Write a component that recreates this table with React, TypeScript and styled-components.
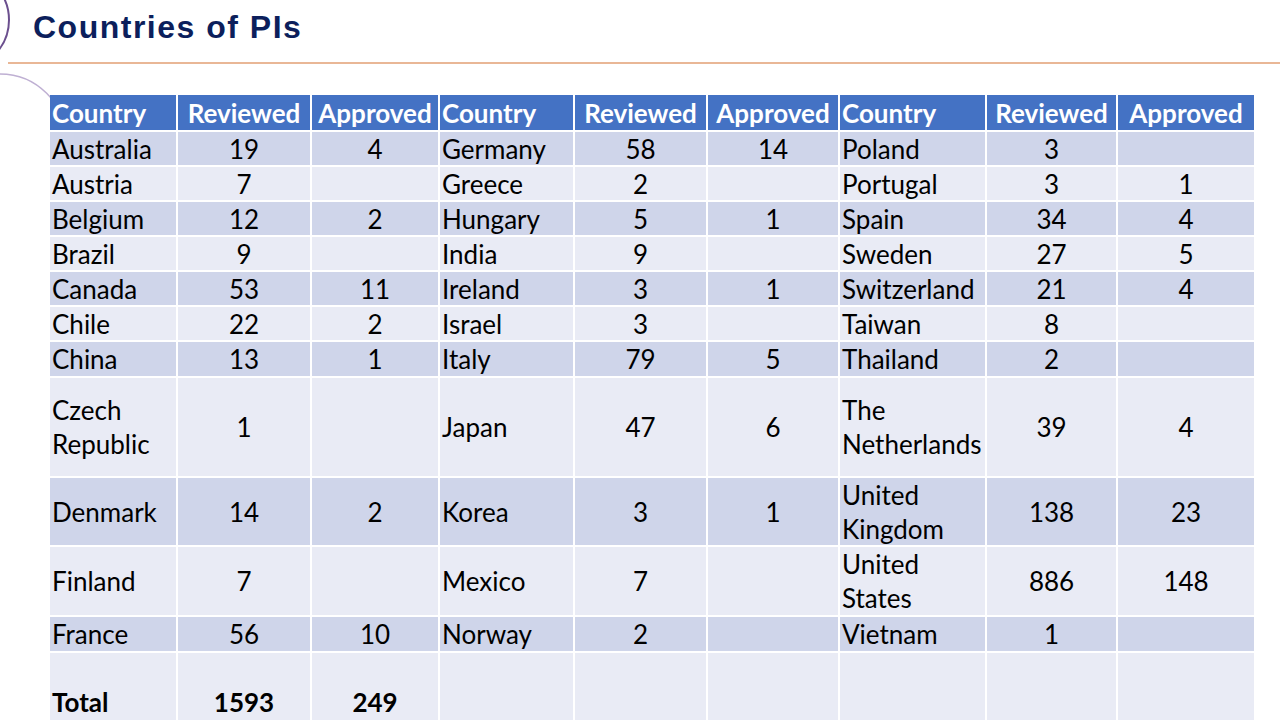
import React from 'react'
import styled, { createGlobalStyle } from 'styled-components'

const GlobalStyle = createGlobalStyle`
  html, body {
    margin: 0;
    padding: 0;
    background: #ffffff;
  }
  body {
    width: 1280px;
    height: 720px;
    overflow: hidden;
  }
`

const Slide = styled.main`
  position: relative;
  width: 1280px;
  height: 720px;
  overflow: hidden;
  background: #ffffff;
`

const Decor = styled.svg`
  position: absolute;
  left: 0;
  top: 0;
  z-index: 0;
`

const TitleBar = styled.header`
  position: relative;
  z-index: 1;
  height: 64px;
  padding-left: 25px;
  margin-left: 8px;
  border-bottom: 2px solid #e9b796;
  box-sizing: border-box;
`

const Title = styled.h1`
  margin: 0;
  padding-top: 7px;
  font-family: "Liberation Sans", Arial, sans-serif;
  font-weight: bold;
  font-size: 32px;
  letter-spacing: 1.5px;
  color: #0c1f5c;
  line-height: 40px;
`

const Body = styled.section`
  position: relative;
  z-index: 1;
  padding: 31px 0 0 50px;
`

const Grid = styled.div`
  display: grid;
  grid-template-columns: 126px 132px 126px 133px 131px 130px 145px 129px 136px;
  grid-template-rows: 35px repeat(6, 33px) 34px 98px 67px 68px 34px 80px;
  gap: 2px;
  width: 1204px;
  background: #ffffff;
  font-family: Lato, "Open Sans", sans-serif;
  font-size: 26px;
  color: #000000;
`

const Cell = styled.div<{ $tone: 'head' | 'dark' | 'light'; $center?: boolean; $total?: boolean }>`
  display: flex;
  align-items: center;
  justify-content: ${(p) => (p.$center ? 'center' : 'flex-start')};
  padding: ${(p) => (p.$total ? '18px 2px 0' : '0 2px')};
  line-height: 34px;
  white-space: pre-line;
  font-weight: ${(p) => (p.$total || p.$tone === 'head' ? 'bold' : 'normal')};
  color: ${(p) => (p.$tone === 'head' ? '#ffffff' : '#000000')};
  background: ${(p) =>
    p.$tone === 'head' ? '#4472c4' : p.$tone === 'dark' ? '#cfd5ea' : '#e9ebf5'};
`

type Entry = [string, string, string]

const rows: Entry[][] = [
  [['Australia', '19', '4'], ['Germany', '58', '14'], ['Poland', '3', '']],
  [['Austria', '7', ''], ['Greece', '2', ''], ['Portugal', '3', '1']],
  [['Belgium', '12', '2'], ['Hungary', '5', '1'], ['Spain', '34', '4']],
  [['Brazil', '9', ''], ['India', '9', ''], ['Sweden', '27', '5']],
  [['Canada', '53', '11'], ['Ireland', '3', '1'], ['Switzerland', '21', '4']],
  [['Chile', '22', '2'], ['Israel', '3', ''], ['Taiwan', '8', '']],
  [['China', '13', '1'], ['Italy', '79', '5'], ['Thailand', '2', '']],
  [['Czech\nRepublic', '1', ''], ['Japan', '47', '6'], ['The\nNetherlands', '39', '4']],
  [['Denmark', '14', '2'], ['Korea', '3', '1'], ['United\nKingdom', '138', '23']],
  [['Finland', '7', ''], ['Mexico', '7', ''], ['United\nStates', '886', '148']],
  [['France', '56', '10'], ['Norway', '2', ''], ['Vietnam', '1', '']],
  [['Total', '1593', '249'], ['', '', ''], ['', '', '']],
]

const headers = ['Country', 'Reviewed', 'Approved']

const App = () => {
  return (
    <Slide>
      <GlobalStyle />
      <Decor width="120" height="140" viewBox="0 0 120 140">
        <circle cx="-40" cy="20" r="49" fill="none" stroke="#6b4f8e" strokeWidth="2" />
        <circle cx="0" cy="140" r="66" fill="none" stroke="#bfb0d3" strokeWidth="1.5" />
      </Decor>
      <TitleBar>
        <Title>Countries of PIs</Title>
      </TitleBar>
      <Body>
        <Grid>
          {[0, 1, 2].map((g) =>
            headers.map((h, i) => (
              <Cell key={`h${g}${i}`} $tone="head" $center={i > 0}>
                {h}
              </Cell>
            ))
          )}
          {rows.map((row, r) =>
            row.map((entry, g) =>
              entry.map((value, i) => (
                <Cell
                  key={`${r}-${g}-${i}`}
                  $tone={r % 2 === 0 ? 'dark' : 'light'}
                  $center={i > 0}
                  $total={r === rows.length - 1}
                >
                  {value}
                </Cell>
              ))
            )
          )}
        </Grid>
      </Body>
    </Slide>
  )
}

export default App
